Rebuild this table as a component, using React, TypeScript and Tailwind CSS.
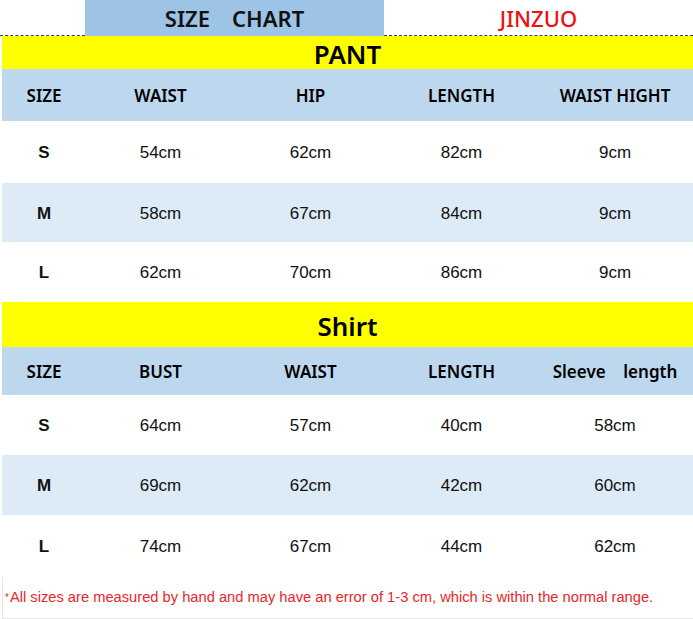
import React from 'react';

const head = "font-['Noto_Sans','Open_Sans',sans-serif]";
const body = "font-['Liberation_Sans',Arial,sans-serif]";

type Table = {
  title: string;
  titleH: string;
  headH: string;
  cols: string[];
  rows: { size: string; vals: string[]; h: string }[];
};

const tables: Table[] = [
  {
    title: 'PANT',
    titleH: 'h-[33px]',
    headH: 'h-[52px]',
    cols: ['SIZE', 'WAIST', 'HIP', 'LENGTH', 'WAIST HIGHT'],
    rows: [
      { size: 'S', vals: ['54cm', '62cm', '82cm', '9cm'], h: 'h-[62px]' },
      { size: 'M', vals: ['58cm', '67cm', '84cm', '9cm'], h: 'h-[59px]' },
      { size: 'L', vals: ['62cm', '70cm', '86cm', '9cm'], h: 'h-[60px]' },
    ],
  },
  {
    title: 'Shirt',
    titleH: 'h-[45px]',
    headH: 'h-[48px]',
    cols: ['SIZE', 'BUST', 'WAIST', 'LENGTH', 'Sleeve\u00a0\u00a0\u00a0\u00a0length'],
    rows: [
      { size: 'S', vals: ['64cm', '57cm', '40cm', '58cm'], h: 'h-[60px]' },
      { size: 'M', vals: ['69cm', '62cm', '42cm', '60cm'], h: 'h-[60px]' },
      { size: 'L', vals: ['74cm', '67cm', '44cm', '62cm'], h: 'h-[62px]' },
    ],
  },
];

const grid = 'grid grid-cols-[84px_149px_151px_151px_156px]';

export default function App() {
  return (
    <div className="w-[693px] h-[619px] bg-white overflow-hidden flex flex-col">
      {/* title row */}
      <div className="flex h-[36px]">
        <div className="w-[85px] border-b border-dashed border-gray-700" />
        <div className={`w-[299px] bg-[#9dc3e6] flex items-center justify-center gap-[22px] pt-[1px] text-[22px] font-semibold text-[#111] ${head}`}>
          <span>SIZE</span>
          <span>CHART</span>
        </div>
        <div className={`flex-1 flex items-center justify-center pt-[1px] border-b border-dashed border-gray-700 text-[22px] font-medium text-[#ee1111] ${head}`}>
          JINZUO
        </div>
      </div>

      {tables.map((t) => (
        <div key={t.title} className="ml-[2px]">
          <div className={`${t.titleH} bg-[#ffff00] flex items-center justify-center pt-[3px] text-[26px] font-semibold text-black ${head}`}>
            {t.title}
          </div>
          <div className={`${grid} ${t.headH} bg-[#bdd7ee] items-center pt-[2px] text-center text-[17px] font-semibold text-black ${head}`}>
            {t.cols.map((c) => (
              <span key={c} className="whitespace-nowrap">{c}</span>
            ))}
          </div>
          {t.rows.map((r, i) => (
            <div
              key={r.size}
              className={`${grid} ${r.h} items-center pt-[2px] text-center text-[17px] text-[#111] ${body} ${i === 1 ? 'bg-[#ddebf7]' : 'bg-white'}`}
            >
              <span className="font-bold">{r.size}</span>
              {r.vals.map((v, j) => (
                <span key={j}>{v}</span>
              ))}
            </div>
          ))}
        </div>
      ))}

      {/* note */}
      <div className={`flex-1 ml-[2px] border-l border-b border-[#e5e5e5] flex items-center pl-[2px] text-[14.7px] text-[#e8262b] whitespace-nowrap ${body}`}>
        <span className="text-[10px] mr-[1px]">*</span>
        All sizes are measured by hand and may have an error of 1-3 cm, which is within the normal range.
      </div>
    </div>
  );
}
